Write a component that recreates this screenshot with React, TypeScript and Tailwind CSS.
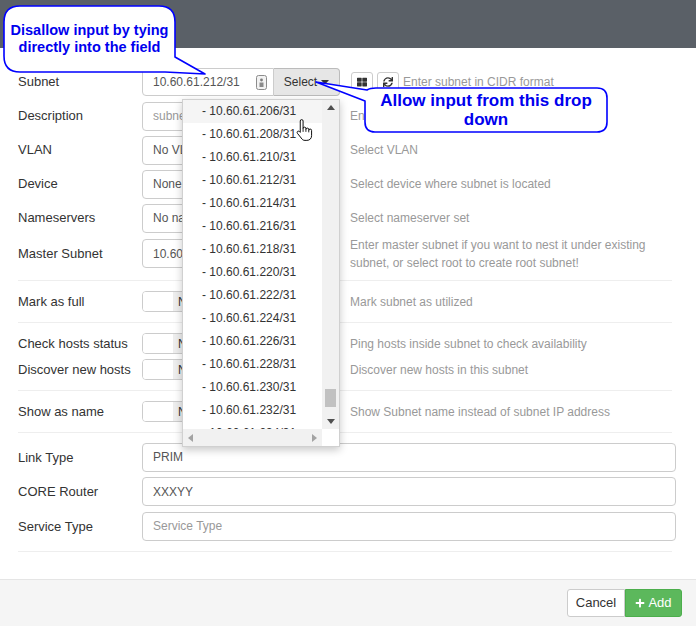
import React from "react";
import { FaThLarge, FaSync, FaPlus } from "react-icons/fa";

const subnets = [
  206, 208, 210, 212, 214, 216, 218, 220, 222, 224, 226, 228, 230, 232, 234,
];

function Row({
  label,
  children,
  hint,
  height = "h-[34px]",
}: {
  label: string;
  children: React.ReactNode;
  hint?: React.ReactNode;
  height?: string;
}) {
  return (
    <div className={`flex items-center ${height}`}>
      <div className="w-[124px] shrink-0">{label}</div>
      <div className="w-[198px] shrink-0 flex items-center text-[12px]">{children}</div>
      <div className="ml-[10px] flex-1 text-[#999] text-[12px] leading-[18px]">{hint}</div>
    </div>
  );
}

function FieldRow({ label, children }: { label: string; children: React.ReactNode }) {
  return (
    <div className="flex items-center h-[34.5px]">
      <div className="w-[124px] shrink-0">{label}</div>
      <div className="flex-1 text-[12px]">{children}</div>
    </div>
  );
}

function TextBox({ value, placeholder }: { value?: string; placeholder?: string }) {
  return (
    <div className="h-[29px] w-full border border-[#ccc] rounded-[4px] pl-[10px] flex items-center text-[#555] overflow-hidden whitespace-nowrap">
      {value ? value : <span className="text-[#999]">{placeholder}</span>}
    </div>
  );
}

function Switch() {
  return (
    <div className="h-[21px] w-[62px] border border-[#ccc] rounded-[4px] flex overflow-hidden">
      <div className="w-[30px] bg-white" />
      <div className="flex-1 bg-[#eee] flex items-center pl-[5px] text-[#333] text-[12px]">No</div>
    </div>
  );
}

function Sep() {
  return <div className="h-px bg-[#eee] mr-[4px]" />;
}

function Hand() {
  return (
    <svg width="17" height="24" viewBox="0 0 18 24" className="absolute left-[296px] top-[118px]">
      <path
        d="M4.5 2.5 A1.5 1.5 0 0 1 7.5 2.5 V10.5 A1.5 1.5 0 0 1 10.5 10.5 V11.5 A1.5 1.5 0 0 1 13.5 11.5 V12.5 A1.5 1.5 0 0 1 16.5 12.5 V18 C16.5 21 14.5 23 11.5 23 H9.5 C7.5 23 6.5 22 5.5 20.5 L1.5 15.5 C0.8 14.5 1.3 13.2 2.5 13.2 C3.3 13.2 4 13.8 4.5 14.5 Z"
        fill="#fff"
        stroke="#000"
        strokeWidth="1"
        strokeLinejoin="round"
      />
      <path d="M7.5 10.5 V14 M10.5 11.5 V14 M13.5 12.5 V14.5" stroke="#000" strokeWidth="0.9" fill="none" />
    </svg>
  );
}

export default function App() {
  return (
    <div className="relative w-[696px] h-[626px] overflow-hidden bg-white font-['Liberation_Sans',Arial,sans-serif] text-[13px] text-[#333]">
      <div className="h-[48px] bg-[#5a6067]" />

      <div className="h-[531px] pl-[18px] pr-[20px] pt-[17px]">
        <Row
          label="Subnet"
          hint={
            <div className="flex items-center">
              <button className="ml-px w-[22px] h-[20px] border border-[#ccc] rounded-[3px] bg-white flex items-center justify-center text-[#333]">
                <FaThLarge size={10} />
              </button>
              <button className="ml-[4px] w-[22px] h-[20px] border border-[#ccc] rounded-[3px] bg-white flex items-center justify-center text-[#333]">
                <FaSync size={10} />
              </button>
              <span className="ml-[4px]">Enter subnet in CIDR format</span>
            </div>
          }
        >
          <div className="h-[28px] w-[132px] border border-[#ccc] rounded-l-[4px] pl-[10px] pr-[6px] flex items-center justify-between text-[#555]">
            <span>10.60.61.212/31</span>
            <svg width="11" height="15" viewBox="0 0 11 15">
              <rect x="0.5" y="0.5" width="10" height="14" rx="2" fill="#f2f2f2" stroke="#8c8c8c" />
              <circle cx="5.5" cy="5" r="1.4" fill="#7a7a7a" />
              <rect x="3.5" y="7.5" width="4" height="4.5" fill="#8a8a8a" />
            </svg>
          </div>
          <button className="h-[28px] w-[66px] border border-l-0 border-[#bbb] rounded-r-[4px] bg-[#e6e6e6] flex items-center justify-center gap-[4px] text-[#333]">
            Select
            <svg width="8" height="5" viewBox="0 0 8 5">
              <path d="M0 0 H8 L4 4.5 Z" fill="#333" />
            </svg>
          </button>
        </Row>
        <Row label="Description" hint="Enter subnet description">
          <TextBox placeholder="subnet description" />
        </Row>
        <Row label="VLAN" hint="Select VLAN">
          <TextBox value="No VLAN" />
        </Row>
        <Row label="Device" hint="Select device where subnet is located">
          <TextBox value="None" />
        </Row>
        <Row label="Nameservers" hint="Select nameserver set">
          <TextBox value="No nameservers" />
        </Row>
        <Row
          label="Master Subnet"
          height="h-[37px]"
          hint="Enter master subnet if you want to nest it under existing subnet, or select root to create root subnet!"
        >
          <TextBox value="10.60.61.0/24" />
        </Row>
        <div className="h-[8px]" />
        <Sep />
        <Row label="Mark as full" height="h-[41px]" hint="Mark subnet as utilized">
          <Switch />
        </Row>
        <Sep />
        <div className="py-[7.5px]">
          <Row label="Check hosts status" height="h-[26px]" hint="Ping hosts inside subnet to check availability">
            <Switch />
          </Row>
          <Row label="Discover new hosts" height="h-[26px]" hint="Discover new hosts in this subnet">
            <Switch />
          </Row>
        </div>
        <Sep />
        <Row label="Show as name" height="h-[41px]" hint="Show Subnet name instead of subnet IP address">
          <Switch />
        </Row>
        <Sep />
        <div className="pt-[7px] pb-[7px]">
          <FieldRow label="Link Type">
            <TextBox value="PRIM" />
          </FieldRow>
          <FieldRow label="CORE Router">
            <TextBox value="XXXYY" />
          </FieldRow>
          <FieldRow label="Service Type">
            <TextBox placeholder="Service Type" />
          </FieldRow>
        </div>
        <Sep />
      </div>

      <div className="h-[47px] border-t border-[#e5e5e5] bg-[#f5f5f5] flex items-center justify-end pr-[14px]">
        <button className="h-[28px] w-[58px] border border-[#ccc] rounded-l-[3px] bg-white text-[#333]">
          Cancel
        </button>
        <button className="h-[28px] w-[57px] border border-[#4cae4c] rounded-r-[3px] bg-[#5cb85c] text-white flex items-center justify-center gap-[3px]">
          <FaPlus size={10} />
          Add
        </button>
      </div>

      {/* dropdown list */}
      <div className="absolute left-[182px] top-[99px] w-[158px] h-[348px] bg-white border border-[#d0d0d0] shadow-[0_3px_8px_rgba(0,0,0,0.22)] flex flex-col text-[12px]">
        <div className="flex flex-1 min-h-0">
          <div className="flex-1 overflow-hidden">
            {subnets.map((n, i) => (
              <div
                key={n}
                className={`h-[23px] leading-[23px] pl-[19px] whitespace-nowrap text-[#333] ${i === 0 ? "bg-[#f5f5f5]" : ""}`}
              >
                - 10.60.61.{n}/31
              </div>
            ))}
          </div>
          <div className="relative w-[17px] bg-[#f1f1f1] flex flex-col items-center justify-between py-[5px]">
            <svg width="8" height="5" viewBox="0 0 8 5">
              <path d="M0 5 H8 L4 0 Z" fill="#505050" />
            </svg>
            <div className="absolute left-[3px] top-[289px] w-[11px] h-[18px] bg-[#c1c1c1]" />
            <svg width="8" height="5" viewBox="0 0 8 5">
              <path d="M0 0 H8 L4 5 Z" fill="#505050" />
            </svg>
          </div>
        </div>
        <div className="h-[17px] flex">
          <div className="flex-1 bg-[#f1f1f1] flex items-center justify-between px-[5px]">
            <svg width="5" height="8" viewBox="0 0 5 8">
              <path d="M5 0 V8 L0 4 Z" fill="#a3a3a3" />
            </svg>
            <svg width="5" height="8" viewBox="0 0 5 8">
              <path d="M0 0 V8 L5 4 Z" fill="#a3a3a3" />
            </svg>
          </div>
          <div className="w-[17px] bg-white" />
        </div>
      </div>

      <Hand />

      {/* callouts */}
      <svg className="absolute left-0 top-0 pointer-events-none" width="696" height="626">
        <path
          d="M20 6 H159 Q175 6 175 22 V57 L205 74 L165 72 H20 Q4 72 4 56 V22 Q4 6 20 6 Z"
          fill="#fff"
          stroke="#0000ff"
          strokeWidth="1.6"
          strokeLinejoin="round"
        />
        <path
          d="M376 88 H597 Q607 88 607 98 V122 Q607 132 597 132 H375 Q365 132 365 122 V101 L316 82 L367 90 Q370 88 376 88 Z"
          fill="#fff"
          stroke="#0000ff"
          strokeWidth="1.6"
          strokeLinejoin="round"
        />
      </svg>
      <div className="absolute left-[4px] top-[6px] w-[171px] h-[66px] flex items-center justify-center text-center text-[#0000ee] font-bold text-[14.5px] leading-[17px]">
        Disallow input by tying
        <br />
        directly into the field
      </div>
      <div className="absolute left-[365px] top-[88px] w-[242px] h-[44px] flex items-center justify-center text-center text-[#0000ee] font-bold text-[17px] leading-[19px]">
        Allow input from this drop
        <br />
        down
      </div>
    </div>
  );
}
